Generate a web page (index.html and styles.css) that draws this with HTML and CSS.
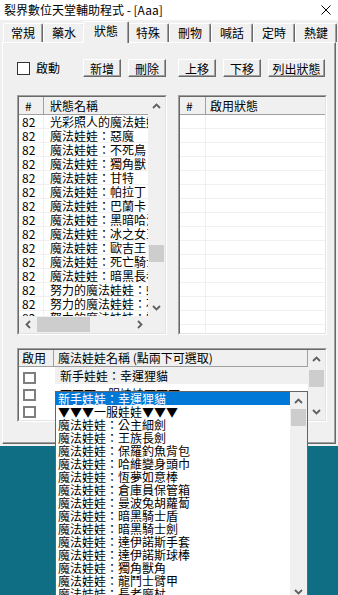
FILE: index.html
```html
<!DOCTYPE html>
<html lang="zh-Hant">
<head>
    <meta charset="UTF-8">
    <meta name="viewport" content="width=device-width, initial-scale=1.0">
    <title>裂界數位天堂輔助程式</title>
    <link rel="stylesheet" href="styles.css">
</head>
<body>
    <div class="window">
        <div class="titlebar">
            <span class="title">裂界數位天堂輔助程式 - [Aaa]</span>
            <svg class="close" width="10" height="10" viewBox="0 0 10 10"><path d="M0.5 0.5 L9.5 9.5 M9.5 0.5 L0.5 9.5" stroke="#000" stroke-width="1"/></svg>
        </div>
        <div class="tabs">
            <div class="tab first">常規</div>
            <div class="tab">藥水</div>
            <div class="tab active">狀態</div>
            <div class="tab">特殊</div>
            <div class="tab">刪物</div>
            <div class="tab">喊話</div>
            <div class="tab">定時</div>
            <div class="tab">熱鍵</div>
        </div>
        <div class="page">
            <div class="toolbar">
                <label class="check"><span class="box"></span>啟動</label>
                <button class="btn btn-add">新增</button>
                <button class="btn btn-del">刪除</button>
                <button class="btn btn-up">上移</button>
                <button class="btn btn-down">下移</button>
                <button class="btn btn-list">列出狀態</button>
            </div>

            <div class="lists">
                <div class="listview lv-left">
                    <div class="lv-inner">
                        <div class="lv-main">
                            <div class="lv-head">
                                <span class="h-num">#</span>
                                <span class="h-name">狀態名稱</span>
                            </div>
                            <div class="row"><span class="c-num">82</span><span class="c-name">光彩照人的魔法娃娃</span></div>
                            <div class="row"><span class="c-num">82</span><span class="c-name">魔法娃娃：惡魔</span></div>
                            <div class="row"><span class="c-num">82</span><span class="c-name">魔法娃娃：不死鳥</span></div>
                            <div class="row"><span class="c-num">82</span><span class="c-name">魔法娃娃：獨角獸</span></div>
                            <div class="row"><span class="c-num">82</span><span class="c-name">魔法娃娃：甘特</span></div>
                            <div class="row"><span class="c-num">82</span><span class="c-name">魔法娃娃：帕拉丁</span></div>
                            <div class="row"><span class="c-num">82</span><span class="c-name">魔法娃娃：巴蘭卡</span></div>
                            <div class="row"><span class="c-num">82</span><span class="c-name">魔法娃娃：黑暗哈汀</span></div>
                            <div class="row"><span class="c-num">82</span><span class="c-name">魔法娃娃：冰之女王</span></div>
                            <div class="row"><span class="c-num">82</span><span class="c-name">魔法娃娃：歐吉王</span></div>
                            <div class="row"><span class="c-num">82</span><span class="c-name">魔法娃娃：死亡騎士</span></div>
                            <div class="row"><span class="c-num">82</span><span class="c-name">魔法娃娃：暗黑長老</span></div>
                            <div class="row"><span class="c-num">82</span><span class="c-name">努力的魔法娃娃：蛇女</span></div>
                            <div class="row"><span class="c-num">82</span><span class="c-name">努力的魔法娃娃：石頭</span></div>
                            <div class="row"><span class="c-num">82</span><span class="c-name">努力的魔法娃娃：雪怪</span></div>
                        </div>
                        <div class="vscroll">
                            <div class="arrow"><svg width="9" height="6" viewBox="0 0 9 6"><path d="M1 5 L4.5 1.5 L8 5" fill="none" stroke="#606060" stroke-width="1.8"/></svg></div>
                            <div class="thumb thumb-left"></div>
                            <div class="arrow arrow-end"><svg width="9" height="6" viewBox="0 0 9 6"><path d="M1 1 L4.5 4.5 L8 1" fill="none" stroke="#606060" stroke-width="1.8"/></svg></div>
                        </div>
                        <div class="hscroll">
                            <div class="arrow"><svg width="6" height="9" viewBox="0 0 6 9"><path d="M5 1 L1.5 4.5 L5 8" fill="none" stroke="#606060" stroke-width="1.8"/></svg></div>
                            <div class="hthumb"></div>
                            <div class="arrow arrow-end"><svg width="6" height="9" viewBox="0 0 6 9"><path d="M1 1 L4.5 4.5 L1 8" fill="none" stroke="#606060" stroke-width="1.8"/></svg></div>
                        </div>
                        <div class="corner"></div>
                    </div>
                </div>

                <div class="listview lv-right">
                    <div class="lv-inner">
                        <div class="lv-main">
                            <div class="lv-head">
                                <span class="h-num">#</span>
                                <span class="h-name">啟用狀態</span>
                            </div>
                            <div class="row"><span class="c-num"></span><span class="c-name"></span></div>
                            <div class="row"><span class="c-num"></span><span class="c-name"></span></div>
                            <div class="row"><span class="c-num"></span><span class="c-name"></span></div>
                            <div class="row"><span class="c-num"></span><span class="c-name"></span></div>
                            <div class="row"><span class="c-num"></span><span class="c-name"></span></div>
                            <div class="row"><span class="c-num"></span><span class="c-name"></span></div>
                            <div class="row"><span class="c-num"></span><span class="c-name"></span></div>
                            <div class="row"><span class="c-num"></span><span class="c-name"></span></div>
                            <div class="row"><span class="c-num"></span><span class="c-name"></span></div>
                            <div class="row"><span class="c-num"></span><span class="c-name"></span></div>
                            <div class="row"><span class="c-num"></span><span class="c-name"></span></div>
                            <div class="row"><span class="c-num"></span><span class="c-name"></span></div>
                            <div class="row"><span class="c-num"></span><span class="c-name"></span></div>
                            <div class="row"><span class="c-num"></span><span class="c-name"></span></div>
                            <div class="row"><span class="c-num"></span><span class="c-name"></span></div>
                            <div class="row"><span class="c-num"></span><span class="c-name"></span></div>
                        </div>
                    </div>
                </div>
            </div>

            <div class="grid">
                <div class="grid-inner">
                    <div class="grid-main">
                        <div class="g-head">
                            <span class="gh-chk">啟用</span>
                            <span class="gh-name">魔法娃娃名稱 (點兩下可選取)</span>
                        </div>
                        <div class="g-row">
                            <span class="g-chk"><span class="gbox"></span></span>
                            <span class="g-val editing">新手娃娃：幸運狸貓</span>
                        </div>
                        <div class="g-row">
                            <span class="g-chk"><span class="gbox"></span></span>
                            <span class="g-val under">▼▼▼一服娃娃▼▼▼</span>
                        </div>
                        <div class="g-row">
                            <span class="g-chk"><span class="gbox"></span></span>
                            <span class="g-val"></span>
                        </div>
                    </div>
                    <div class="vscroll">
                        <div class="arrow"><svg width="9" height="6" viewBox="0 0 9 6"><path d="M1 5 L4.5 1.5 L8 5" fill="none" stroke="#606060" stroke-width="1.8"/></svg></div>
                        <div class="thumb thumb-grid"></div>
                        <div class="arrow arrow-end"><svg width="9" height="6" viewBox="0 0 9 6"><path d="M1 1 L4.5 4.5 L8 1" fill="none" stroke="#606060" stroke-width="1.8"/></svg></div>
                    </div>
                </div>
            </div>
        </div>
    </div>

    <div class="dropdown">
        <div class="dd-list">
            <div class="dd-item sel">新手娃娃：幸運狸貓</div>
            <div class="dd-item">▼▼▼一服娃娃▼▼▼</div>
            <div class="dd-item">魔法娃娃：公主細劍</div>
            <div class="dd-item">魔法娃娃：王族長劍</div>
            <div class="dd-item">魔法娃娃：保羅釣魚背包</div>
            <div class="dd-item">魔法娃娃：哈維變身頭巾</div>
            <div class="dd-item">魔法娃娃：恆夢如意棒</div>
            <div class="dd-item">魔法娃娃：倉庫員保管箱</div>
            <div class="dd-item">魔法娃娃：曼波兔胡蘿蔔</div>
            <div class="dd-item">魔法娃娃：暗黑騎士盾</div>
            <div class="dd-item">魔法娃娃：暗黑騎士劍</div>
            <div class="dd-item">魔法娃娃：達伊諾斯手套</div>
            <div class="dd-item">魔法娃娃：達伊諾斯球棒</div>
            <div class="dd-item">魔法娃娃：獨角獸角</div>
            <div class="dd-item">魔法娃娃：龍鬥士臂甲</div>
            <div class="dd-item">魔法娃娃：長老魔杖</div>
        </div>
        <div class="vscroll">
            <div class="arrow"><svg width="9" height="6" viewBox="0 0 9 6"><path d="M1 5 L4.5 1.5 L8 5" fill="none" stroke="#606060" stroke-width="1.8"/></svg></div>
            <div class="thumb"></div>
            <div class="arrow arrow-end"><svg width="9" height="6" viewBox="0 0 9 6"><path d="M1 1 L4.5 4.5 L8 1" fill="none" stroke="#606060" stroke-width="1.8"/></svg></div>
        </div>
    </div>
</body>
</html>
```

FILE: styles.css
```css
body {
    margin: 0;
    width: 338px;
    height: 595px;
    position: relative;
    overflow: hidden;
    background-color: #0f6d84;
    font-family: "Noto Sans CJK TC", "Noto Sans", sans-serif;
    font-size: 12px;
    color: #000;
}
.window {
    width: 338px;
    height: 446px;
    background-color: #f0f0f0;
    display: flex;
    flex-direction: column;
}

/* title bar */
.titlebar {
    height: 20px;
    background-color: #fff;
    display: flex;
    align-items: center;
    justify-content: space-between;
    padding: 0 7px 0 4px;
    line-height: 18px;
}
.close {
    display: block;
}

/* tab strip */
.tabs {
    height: 22px;
    display: flex;
    align-items: flex-end;
    padding-left: 3px;
}
.tab {
    width: 42px;
    height: 19px;
    box-sizing: border-box;
    border: 1px solid #fff;
    border-bottom: none;
    border-right-color: #696969;
    border-radius: 2px 2px 0 0;
    box-shadow: inset -1px 0 #a0a0a0;
    text-align: center;
    line-height: 18px;
    flex-shrink: 0;
}
.tab.first {
    width: 40px;
}
.tab.active {
    width: 46px;
    height: 22px;
    margin: 0 -2px -1px;
    position: relative;
    z-index: 1;
    background-color: #f0f0f0;
}
.page {
    flex: 1;
    margin: 0 2px 2px;
    border: 1px solid;
    border-color: #fff #696969 #696969 #fff;
    box-shadow: inset -1px -1px #a0a0a0;
    padding: 16px 0 0 14px;
}

/* toolbar */
.toolbar {
    display: flex;
    align-items: center;
    height: 18px;
}
.check {
    display: flex;
    align-items: center;
    gap: 6px;
    line-height: 18px;
}
.check .box {
    width: 13px;
    height: 13px;
    box-sizing: border-box;
    border: 1px solid #333;
    background-color: #fff;
}
.btn {
    height: 18px;
    width: 38px;
    box-sizing: border-box;
    padding: 0;
    border: 1px solid;
    border-color: #fff #696969 #696969 #fff;
    box-shadow: inset -1px -1px #a0a0a0;
    background-color: #f0f0f0;
    font: inherit;
    line-height: 15px;
    color: #000;
}
.btn-add { margin-left: 23px; }
.btn-del { margin-left: 7px; }
.btn-up { margin-left: 12px; }
.btn-down { margin-left: 7px; }
.btn-list { margin-left: 7px; width: 57px; }

/* list views */
.lists {
    display: flex;
    gap: 11px;
    margin-top: 18px;
    height: 240px;
}
.listview {
    box-sizing: border-box;
    border: 1px solid;
    border-color: #a0a0a0 #fff #fff #a0a0a0;
}
.lv-left { width: 150px; }
.lv-right { width: 149px; }
.lv-inner {
    height: 100%;
    box-sizing: border-box;
    border: 1px solid;
    border-color: #696969 #e3e3e3 #e3e3e3 #696969;
    background-color: #fff;
}
.lv-left .lv-inner {
    display: grid;
    grid-template-columns: 1fr 17px;
    grid-template-rows: 1fr 17px;
}
.lv-main {
    overflow: hidden;
    height: 100%;
}
.lv-head {
    height: 18px;
    box-sizing: border-box;
    display: flex;
    background-color: #f0f0f0;
    border-bottom: 1px solid #a0a0a0;
    line-height: 17px;
    white-space: nowrap;
}
.h-num {
    width: 25px;
    box-sizing: border-box;
    padding-left: 6px;
    border-right: 1px solid #a0a0a0;
    flex-shrink: 0;
}
.h-name {
    padding-left: 6px;
}
.lv-right .h-num { width: 26px; }
.lv-right .h-name { padding-left: 4px; }
.row {
    height: 14px;
    box-sizing: border-box;
    display: flex;
    border-bottom: 1px solid #f0f0f0;
    line-height: 13px;
    white-space: nowrap;
}
.c-num {
    width: 25px;
    box-sizing: border-box;
    padding-left: 3px;
    border-right: 1px solid #f0f0f0;
    flex-shrink: 0;
}
.lv-right .c-num { width: 26px; }
.c-name {
    padding-left: 6px;
}

/* scroll bars */
.vscroll {
    width: 17px;
    background-color: #f0f0f0;
    display: flex;
    flex-direction: column;
}
.arrow {
    width: 17px;
    height: 17px;
    display: flex;
    align-items: center;
    justify-content: center;
    flex-shrink: 0;
}
.arrow-end {
    margin-top: auto;
}
.thumb {
    height: 17px;
    margin: 0 1px;
    background-color: #cdcdcd;
}
.thumb-left { margin-top: 131px; }
.thumb-grid { margin-top: 3px; }
.hscroll {
    height: 17px;
    background-color: #f0f0f0;
    display: flex;
}
.hscroll .arrow-end {
    margin-top: 0;
    margin-left: auto;
}
.hthumb {
    width: 53px;
    margin: 1px 0 1px 1px;
    background-color: #cdcdcd;
}
.corner {
    background-color: #f0f0f0;
}

/* bottom grid */
.grid {
    margin-top: 13px;
    width: 310px;
    height: 74px;
    box-sizing: border-box;
    border: 1px solid;
    border-color: #a0a0a0 #fff #fff #a0a0a0;
}
.grid-inner {
    height: 100%;
    box-sizing: border-box;
    border: 1px solid;
    border-color: #696969 #e3e3e3 #e3e3e3 #696969;
    background-color: #fff;
    display: flex;
}
.grid-main {
    flex: 1;
    overflow: hidden;
}
.g-head {
    height: 17px;
    box-sizing: border-box;
    display: flex;
    background-color: #f0f0f0;
    border-bottom: 1px solid #a0a0a0;
    border-right: 1px solid #a0a0a0;
    line-height: 16px;
    white-space: nowrap;
}
.gh-chk {
    width: 35px;
    box-sizing: border-box;
    padding-left: 3px;
    border-right: 1px solid #a0a0a0;
}
.gh-name {
    padding-left: 4px;
}
.g-row {
    height: 17px;
    display: flex;
    line-height: 17px;
    white-space: nowrap;
}
.g-chk {
    width: 36px;
    box-sizing: border-box;
    padding: 5px 0 0 4px;
}
.gbox {
    display: block;
    width: 13px;
    height: 12px;
    box-sizing: border-box;
    border: 2px solid #7f7f7f;
    background-color: #fff;
}
.g-val {
    flex: 1;
    padding-left: 5px;
}
.g-val.editing {
    background-color: #f0f0f0;
}
/* value behind the open list, only its top edge shows */
.g-val.under {
    padding-top: 3px;
    line-height: 14px;
}

/* combo drop-down list */
.dropdown {
    position: absolute;
    left: 55px;
    top: 391px;
    width: 253px;
    height: 210px;
    box-sizing: border-box;
    border: 1px solid #646464;
    background-color: #fff;
    display: flex;
}
.dd-list {
    flex: 1;
    overflow: hidden;
}
.dd-item {
    height: 13px;
    line-height: 13px;
    padding-left: 2px;
    white-space: nowrap;
}
.dd-item.sel {
    background-color: #0078d7;
    color: #fff;
}
.dropdown .thumb {
    flex-shrink: 0;
}
```
